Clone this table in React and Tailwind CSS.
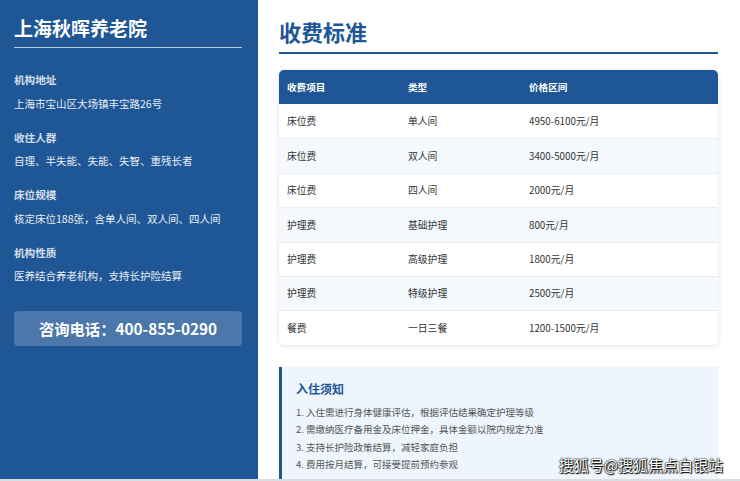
import React from "react";

const font = { fontFamily: '"Noto Sans CJK SC", "Noto Sans", sans-serif' };

const info = [
  ["机构地址", "上海市宝山区大场镇丰宝路26号"],
  ["收住人群", "自理、半失能、失能、失智、重残长者"],
  ["床位规模", "核定床位188张，含单人间、双人间、四人间"],
  ["机构性质", "医养结合养老机构，支持长护险结算"],
];

const rows = [
  ["床位费", "单人间", "4950-6100元/月"],
  ["床位费", "双人间", "3400-5000元/月"],
  ["床位费", "四人间", "2000元/月"],
  ["护理费", "基础护理", "800元/月"],
  ["护理费", "高级护理", "1800元/月"],
  ["护理费", "特级护理", "2500元/月"],
  ["餐费", "一日三餐", "1200-1500元/月"],
];

const notes = [
  "1. 入住需进行身体健康评估，根据评估结果确定护理等级",
  "2. 需缴纳医疗备用金及床位押金，具体金额以院内规定为准",
  "3. 支持长护险政策结算，减轻家庭负担",
  "4. 费用按月结算，可接受提前预约参观",
];

export default function App() {
  return (
    <div className="relative w-[740px] h-[481px] overflow-hidden flex flex-col bg-white" style={font}>
      <div className="flex flex-1 min-h-0">
        <aside className="w-[258px] shrink-0 bg-[#1e5696] pl-[14px] pr-[16px] pt-[14px] text-white">
          <h1 className="text-[19px] leading-[27px] font-bold pb-[6px] border-b border-white/70">上海秋晖养老院</h1>
          <div className="mt-[24px] flex flex-col gap-[18px]">
            {info.map(([k, v]) => (
              <div key={k}>
                <div className="text-[10.6px] leading-[16px] font-bold text-white/80 mb-[7.5px]">{k}</div>
                <div className="text-[10.5px] leading-[16px] text-white/90">{v}</div>
              </div>
            ))}
          </div>
          <div className="mt-[27px] h-[35px] rounded-[4px] bg-white/20 flex items-center justify-center text-[15.3px] font-bold">
            咨询电话：400-855-0290
          </div>
        </aside>
        <main className="flex-1 pl-[21px] pr-[22px] pt-[16px] min-w-0">
          <h2 className="text-[22px] leading-[31px] font-bold text-[#1e5696] pb-[5px] border-b-2 border-[#1e5696]">收费标准</h2>
          <div className="mt-[16px] rounded-[5px] overflow-hidden bg-white shadow-[0_1px_5px_rgba(0,0,0,0.12)]">
            <div className="flex h-[34px] items-center bg-[#1e5696] text-white font-bold text-[9.6px]">
              <div className="w-[121px] pl-[8px]">收费项目</div>
              <div className="w-[121px] pl-[8px]">类型</div>
              <div className="flex-1 pl-[8px]">价格区间</div>
            </div>
            {rows.map((r, i) => (
              <div
                key={i}
                className={`flex h-[34.4px] items-center text-[9.8px] text-[#333] ${i > 0 ? "border-t border-[#e8edf2]" : ""} ${i % 2 === 1 ? "bg-[#f5f9fd]" : "bg-white"}`}
              >
                <div className="w-[121px] pl-[8px]">{r[0]}</div>
                <div className="w-[121px] pl-[8px]">{r[1]}</div>
                <div className="flex-1 pl-[8px]">{r[2]}</div>
              </div>
            ))}
          </div>
          <div className="mt-[22px] border-l-[3px] border-[#1e5696] bg-[#eef5fd] pl-[14px] pt-[13px] pb-[10px]">
            <div className="text-[12px] leading-[18px] font-bold text-[#1e5696] mb-[6px]">入住须知</div>
            {notes.map((n) => (
              <div key={n} className="text-[9.5px] leading-[17.4px] text-[#555]">{n}</div>
            ))}
          </div>
        </main>
      </div>
      <div className="h-[2px] bg-[#d9dde2] shrink-0" />
      <div
        className="absolute right-[17px] top-[454px] text-[15px] leading-[22px] text-white"
        style={{ textShadow: "0 0 2px #000, 0 0 1px #000, 1px 1px 1px #000" }}
      >
        搜狐号@搜狐焦点白银站
      </div>
    </div>
  );
}
